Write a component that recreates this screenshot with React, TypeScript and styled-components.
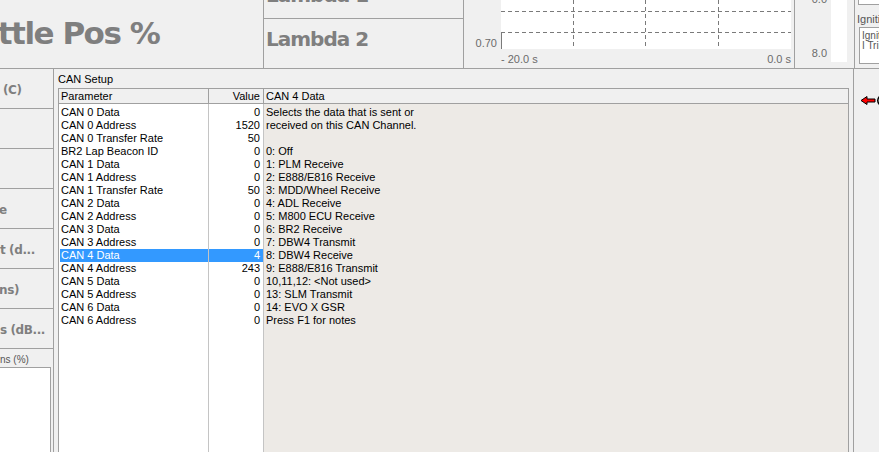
import React from 'react';
import styled, { createGlobalStyle } from 'styled-components';

const GlobalStyle = createGlobalStyle`
  html, body { margin: 0; padding: 0; background: #f0f0f0; }
  body {
    font-family: "Liberation Sans", Arial, sans-serif;
    font-size: 11px;
    color: #000;
  }
`;

const LINE = '#a0a0a0';

const Screen = styled.div`
  width: 879px;
  height: 452px;
  overflow: hidden;
  display: flex;
  flex-direction: column;
  background: #f0f0f0;
`;

/* ---------- top strip ---------- */

const TopBar = styled.div`
  flex: none;
  height: 69px;
  box-sizing: border-box;
  display: flex;
  border-bottom: 1px solid ${LINE};
`;

const ThrottlePanel = styled.div`
  width: 264px;
  box-sizing: border-box;
  border-right: 1px solid ${LINE};
  overflow: hidden;
  padding-top: 18px;
`;

const BigTitle = styled.div`
  font-family: "DejaVu Sans", Verdana, sans-serif;
  font-weight: bold;
  font-size: 31px;
  line-height: 31px;
  letter-spacing: -1.5px;
  color: #7f7f7f;
  white-space: nowrap;
  margin-left: -76px;
`;

const LambdaPanel = styled.div`
  width: 200px;
  box-sizing: border-box;
  border-right: 1px solid ${LINE};
  display: flex;
  flex-direction: column;
`;

const LambdaCell = styled.div<{ $first?: boolean }>`
  height: ${(p) => (p.$first ? '19px' : 'auto')};
  flex: ${(p) => (p.$first ? 'none' : '1')};
  box-sizing: border-box;
  overflow: hidden;
  border-bottom: ${(p) => (p.$first ? `1px solid ${LINE}` : 'none')};
  padding-left: 2px;
`;

const LambdaText = styled.div<{ $shift: number }>`
  font-family: "DejaVu Sans", Verdana, sans-serif;
  font-weight: bold;
  font-size: 20px;
  line-height: 20px;
  letter-spacing: -1px;
  color: #7f7f7f;
  white-space: nowrap;
  margin-top: ${(p) => p.$shift}px;
`;

const GraphPanel = styled.div`
  width: 331px;
  box-sizing: border-box;
  border-right: 1px solid ${LINE};
  display: flex;
  flex-direction: column;
`;

const PlotRow = styled.div`
  height: 49px;
  display: flex;
`;

const YAxis = styled.div`
  width: 37px;
  display: flex;
  align-items: flex-end;
  justify-content: flex-end;
  padding-right: 4px;
  box-sizing: border-box;
`;

const AxisLabel = styled.span`
  font-size: 11px;
  line-height: 11px;
  color: #6b6b6b;
  white-space: nowrap;
`;

const XAxis = styled.div`
  margin-left: 37px;
  width: 290px;
  display: flex;
  justify-content: space-between;
  padding-top: 5px;
`;

const GaugePanel = styled.div`
  width: 60px;
  box-sizing: border-box;
  border-right: 1px solid ${LINE};
  display: flex;
`;

const GaugeScale = styled.div`
  width: 36px;
  display: flex;
  flex-direction: column;
  justify-content: space-between;
  align-items: flex-end;
  padding: 0 4px 9px 0;
  box-sizing: border-box;
  margin-top: -6px;
`;

const GaugeBar = styled.div`
  width: 16px;
  height: 62px;
  background: #fff;
`;

const TopRight = styled.div`
  flex: 1;
  display: flex;
  flex-direction: column;
  overflow: hidden;
`;

const StubBox = styled.div`
  height: 4px;
  margin-left: 3px;
  background: #fff;
  border-left: 1px solid ${LINE};
  border-bottom: 1px solid ${LINE};
`;

const GroupTitle = styled.div`
  margin-top: 8px;
  padding-left: 2px;
  line-height: 13px;
  color: #555;
  white-space: nowrap;
`;

const InnerBox = styled.div`
  margin: 1px 0 0 4px;
  height: 37px;
  box-sizing: border-box;
  border: 1px solid ${LINE};
  border-right: none;
  background: #fff;
  padding: 3px 0 0 2px;
  color: #555;
  font-size: 10px;
  line-height: 10px;
  white-space: nowrap;
  overflow: hidden;
`;

/* ---------- lower area ---------- */

const Body = styled.div`
  flex: 1;
  display: flex;
  min-height: 0;
`;

const SideColumn = styled.div`
  width: 54px;
  box-sizing: border-box;
  border-right: 1px solid ${LINE};
  display: flex;
  flex-direction: column;
  overflow: hidden;
`;

const SideRow = styled.div`
  height: 40px;
  flex: none;
  box-sizing: border-box;
  border-bottom: 1px solid ${LINE};
  display: flex;
  align-items: center;
  overflow: hidden;
`;

const SideLabel = styled.span<{ $indent: number }>`
  font-family: "DejaVu Sans", Verdana, sans-serif;
  font-weight: bold;
  font-size: 12px;
  letter-spacing: -0.4px;
  color: #7f7f7f;
  white-space: nowrap;
  margin-left: ${(p) => p.$indent}px;
  margin-top: 2px;
`;

const SideCaption = styled.div`
  height: 18px;
  flex: none;
  font-size: 10px;
  line-height: 12px;
  padding-top: 5px;
  box-sizing: border-box;
  color: #555;
  white-space: nowrap;
`;

const SideWell = styled.div`
  flex: 1;
  width: 50px;
  background: #fff;
  border-top: 1px solid ${LINE};
  border-right: 1px solid ${LINE};
`;

const SetupPanel = styled.div`
  flex: 1;
  display: flex;
  flex-direction: column;
  padding: 4px 4px 0 4px;
  min-width: 0;
`;

const PanelTitle = styled.div`
  line-height: 13px;
  margin-bottom: 2px;
`;

const Table = styled.div`
  flex: 1;
  display: flex;
  flex-direction: column;
  border: 1px solid ${LINE};
  border-bottom: none;
  min-height: 0;
`;

const HeaderRow = styled.div`
  display: flex;
  height: 15px;
  box-sizing: border-box;
  border-bottom: 1px solid ${LINE};
  line-height: 14px;
  background: #f0f0f0;
`;

const HeadCell = styled.div<{ $w?: number; $right?: boolean }>`
  ${(p) => (p.$w ? `width: ${p.$w}px; flex: none;` : 'flex: 1;')}
  box-sizing: border-box;
  border-right: ${(p) => (p.$w ? `1px solid ${LINE}` : 'none')};
  text-align: ${(p) => (p.$right ? 'right' : 'left')};
  padding: ${(p) => (p.$right ? '0 3px 0 0' : '0 0 0 2px')};
  white-space: nowrap;
`;

const Columns = styled.div`
  flex: 1;
  display: flex;
  min-height: 0;
`;

const ListColumn = styled.div<{ $w: number }>`
  width: ${(p) => p.$w}px;
  flex: none;
  box-sizing: border-box;
  background: #fff;
  border-right: 1px solid #c4c4c4;
  padding-top: 2px;
`;

const Cell = styled.div<{ $selected?: boolean; $right?: boolean }>`
  height: 13px;
  line-height: 13px;
  white-space: nowrap;
  background: ${(p) => (p.$selected ? '#3399ff' : 'transparent')};
  color: ${(p) => (p.$selected ? '#fff' : '#000')};
  text-align: ${(p) => (p.$right ? 'right' : 'left')};
  margin-left: ${(p) => (p.$right ? '0' : '1px')};
  padding: ${(p) => (p.$right ? '0 3px 0 0' : '0 0 0 1px')};
`;

const DescColumn = styled.div`
  flex: 1;
  background: #edeae6;
  padding: 2px 0 0 2px;
`;

const DescLine = styled.div`
  height: 13px;
  line-height: 13px;
  white-space: nowrap;
`;

const RightSide = styled.div`
  width: 26px;
  box-sizing: border-box;
  border-left: 1px solid ${LINE};
  padding: 27px 0 0 6px;
  overflow: hidden;
`;

const params: [string, string][] = [
  ['CAN 0 Data', '0'],
  ['CAN 0 Address', '1520'],
  ['CAN 0 Transfer Rate', '50'],
  ['BR2 Lap Beacon ID', '0'],
  ['CAN 1 Data', '0'],
  ['CAN 1 Address', '0'],
  ['CAN 1 Transfer Rate', '50'],
  ['CAN 2 Data', '0'],
  ['CAN 2 Address', '0'],
  ['CAN 3 Data', '0'],
  ['CAN 3 Address', '0'],
  ['CAN 4 Data', '4'],
  ['CAN 4 Address', '243'],
  ['CAN 5 Data', '0'],
  ['CAN 5 Address', '0'],
  ['CAN 6 Data', '0'],
  ['CAN 6 Address', '0'],
];

const description = [
  'Selects the data that is sent or',
  'received on this CAN Channel.',
  '',
  '0: Off',
  '1: PLM Receive',
  '2: E888/E816 Receive',
  '3: MDD/Wheel Receive',
  '4: ADL Receive',
  '5: M800 ECU Receive',
  '6: BR2 Receive',
  '7: DBW4 Transmit',
  '8: DBW4 Receive',
  '9: E888/E816 Transmit',
  '10,11,12: <Not used>',
  '13: SLM Transmit',
  '14: EVO X GSR',
  'Press F1 for notes',
];

const sideLabels: [string, number][] = [
  ['(C)', 3],
  ['', 0],
  ['', 0],
  ['e', -1],
  ['t (d...', 0],
  ['ns)', -1],
  ['s (dB...', 0],
];

const SELECTED = 11;

const Plot = () => (
  <svg width="290" height="49" style={{ display: 'block' }}>
    <rect x="0" y="0" width="290" height="49" fill="#fff" />
    <g stroke="#7a7a7a" strokeWidth="1" strokeDasharray="4 3" fill="none">
      <line x1="0" y1="11.5" x2="290" y2="11.5" />
      <line x1="0" y1="32.5" x2="290" y2="32.5" />
      <line x1="72.5" y1="0" x2="72.5" y2="49" />
      <line x1="144.5" y1="0" x2="144.5" y2="49" />
      <line x1="217.5" y1="0" x2="217.5" y2="49" />
    </g>
    <line x1="0.5" y1="32" x2="0.5" y2="49" stroke="#7a7a7a" />
  </svg>
);

const Marker = () => (
  <svg width="20" height="10" style={{ display: 'block' }}>
    <polygon
      points="1,4.5 7,0.5 7,3 15,3 15,6 7,6 7,8.5"
      fill="#ff0000"
      stroke="#000"
      strokeWidth="1"
      strokeLinejoin="miter"
    />
    <path d="M19.5 0.5 Q16 4.5 19.5 8.5" stroke="#000" strokeWidth="1.5" fill="none" />
  </svg>
);

const App = () => {
  return (
    <Screen>
      <GlobalStyle />
      <TopBar>
        <ThrottlePanel>
          <BigTitle>Throttle Pos %</BigTitle>
        </ThrottlePanel>
        <LambdaPanel>
          <LambdaCell $first>
            <LambdaText $shift={-15}>Lambda 1</LambdaText>
          </LambdaCell>
          <LambdaCell>
            <LambdaText $shift={10}>Lambda 2</LambdaText>
          </LambdaCell>
        </LambdaPanel>
        <GraphPanel>
          <PlotRow>
            <YAxis>
              <AxisLabel>0.70</AxisLabel>
            </YAxis>
            <Plot />
          </PlotRow>
          <XAxis>
            <AxisLabel>- 20.0 s</AxisLabel>
            <AxisLabel>0.0 s</AxisLabel>
          </XAxis>
        </GraphPanel>
        <GaugePanel>
          <GaugeScale>
            <AxisLabel>0.0</AxisLabel>
            <AxisLabel>8.0</AxisLabel>
          </GaugeScale>
          <GaugeBar />
        </GaugePanel>
        <TopRight>
          <StubBox />
          <GroupTitle>Ignition</GroupTitle>
          <InnerBox>
            <div>Ignition</div>
            <div>I Trim</div>
          </InnerBox>
        </TopRight>
      </TopBar>

      <Body>
        <SideColumn>
          {sideLabels.map(([text, indent], i) => (
            <SideRow key={i}>
              <SideLabel $indent={indent}>{text}</SideLabel>
            </SideRow>
          ))}
          <SideCaption>ns (%)</SideCaption>
          <SideWell />
        </SideColumn>

        <SetupPanel>
          <PanelTitle>CAN Setup</PanelTitle>
          <Table>
            <HeaderRow>
              <HeadCell $w={150}>Parameter</HeadCell>
              <HeadCell $w={55} $right>
                Value
              </HeadCell>
              <HeadCell>{params[SELECTED][0]}</HeadCell>
            </HeaderRow>
            <Columns>
              <ListColumn $w={150}>
                {params.map(([name], i) => (
                  <Cell key={name} $selected={i === SELECTED}>
                    {name}
                  </Cell>
                ))}
              </ListColumn>
              <ListColumn $w={55}>
                {params.map(([name, value], i) => (
                  <Cell key={name} $right $selected={i === SELECTED}>
                    {value}
                  </Cell>
                ))}
              </ListColumn>
              <DescColumn>
                {description.map((line, i) => (
                  <DescLine key={i}>{line}</DescLine>
                ))}
              </DescColumn>
            </Columns>
          </Table>
        </SetupPanel>

        <RightSide>
          <Marker />
        </RightSide>
      </Body>
    </Screen>
  );
};

export default App;
